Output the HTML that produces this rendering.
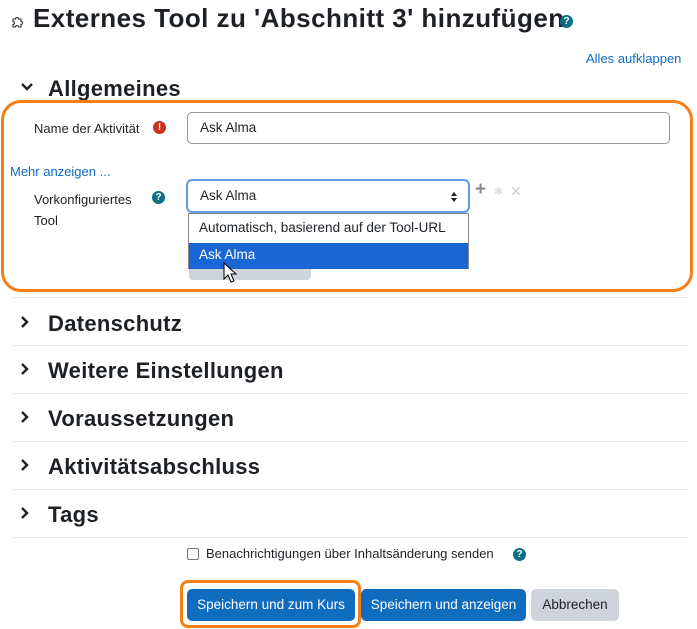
<!DOCTYPE html>
<html><head><meta charset="utf-8"><style>
body{margin:0;width:697px;height:629px;background:#fff;font-family:"Liberation Sans",sans-serif;color:#1d2125;position:relative;overflow:hidden}
.a{position:absolute}
.h{font-weight:bold;font-size:22px;left:48px;letter-spacing:0.3px}
.chev{left:20px}
.sep{left:12px;width:676px;height:1px;background:#dee2e6}
.lbl{font-size:13px;color:#1d2125}
.btn{border-radius:5px;font-size:13.5px;text-align:center;line-height:32px;height:32px;color:#fff;background:#0f6cbf}
.q{width:13px;height:13px;border-radius:50%;background:#0f6e84;color:#fff;font-size:10px;font-weight:bold;text-align:center;line-height:13px}
</style></head><body>
<svg class="a" style="left:10px;top:15px" width="14" height="14" viewBox="0 0 14 14"><path d="M3 4h2.5a1.5 1.5 0 1 1 3 0H11v2.5a1.5 1.5 0 1 1 0 3V12H8.5a1.5 1.5 0 1 0-3 0H3V9.5a1.5 1.5 0 1 0 0-3z" fill="none" stroke="#333" stroke-width="1.1"/></svg>
<div class="a" style="left:33px;top:3px;font-size:26px;font-weight:bold;letter-spacing:0.45px">Externes Tool zu 'Abschnitt 3' hinzufügen</div>
<div class="a q" style="left:560px;top:15px">?</div>
<div class="a" style="left:586px;top:51px;font-size:13px;color:#0f6cbf">Alles aufklappen</div>
<svg class="a chev" style="top:82px" width="14" height="10" viewBox="0 0 14 10"><path d="M2 2l5 5 5-5" fill="none" stroke="#1d2125" stroke-width="2.4"/></svg>
<div class="a h" style="top:76px">Allgemeines</div>
<div class="a" style="left:1px;top:100px;width:686px;height:186px;border:3px solid #f57f17;border-radius:20px"></div>
<div class="a lbl" style="left:34px;top:121px">Name der Aktivität</div>
<div class="a" style="left:153px;top:121px;width:13px;height:13px;border-radius:50%;background:#ca3120;color:#fff;font-size:10px;font-weight:bold;text-align:center;line-height:13px">!</div>
<div class="a" style="left:187px;top:112px;width:483px;height:32px;border:1px solid #8f959e;border-radius:5px;box-sizing:border-box;font-size:13.5px;line-height:30px;padding-left:12px">Ask Alma</div>
<div class="a" style="left:10px;top:164px;font-size:13px;color:#0f6cbf">Mehr anzeigen ...</div>
<div class="a lbl" style="left:34px;top:189px;line-height:21px">Vorkonfiguriertes<br>Tool</div>
<div class="a q" style="left:152px;top:191px">?</div>
<div class="a" style="left:189px;top:262px;width:122px;height:18px;background:#ced4da;border-radius:4px"></div>
<div class="a" style="left:186px;top:179px;width:284px;height:34px;border:2px solid #5c9be0;border-radius:6px;box-sizing:border-box;font-size:13.5px;line-height:30px;padding-left:12px;background:#fff">Ask Alma<svg style="position:absolute;right:11px;top:11px" width="6" height="10" viewBox="0 0 6 10"><path d="M0 4L3 0 6 4zM0 6L3 10 6 6z" fill="#1d2125"/></svg></div>
<div class="a" style="left:475px;top:179px;font-size:19px;font-weight:bold;color:#888">+</div>
<div class="a" style="left:494px;top:185px;font-size:11px;color:#ddd">&#10033;</div>
<div class="a" style="left:510px;top:183px;font-size:14px;color:#ccc">&#10005;</div>
<div class="a" style="left:188px;top:213px;width:281px;height:56px;border:1px solid #888;box-sizing:border-box;background:#fff;font-size:13.5px">
<div style="height:29px;line-height:28px;padding-left:10px">Automatisch, basierend auf der Tool-URL</div>
<div style="height:26px;line-height:24px;padding-left:10px;background:#1a66d4;color:#fff">Ask Alma</div></div>
<svg class="a" style="left:223px;top:262px" width="14" height="22" viewBox="0 0 14 22"><path d="M1 1v16l4-4 3 7 3-1-3-7h5z" fill="#fff" stroke="#000" stroke-width="1"/></svg>
<div class="a sep" style="top:297px"></div>
<svg class="a chev" style="top:315px" width="10" height="14" viewBox="0 0 10 14"><path d="M2 2l5 5-5 5" fill="none" stroke="#1d2125" stroke-width="2.4"/></svg><div class="a h" style="top:311px">Datenschutz</div>
<div class="a sep" style="top:345px"></div>
<svg class="a chev" style="top:362px" width="10" height="14" viewBox="0 0 10 14"><path d="M2 2l5 5-5 5" fill="none" stroke="#1d2125" stroke-width="2.4"/></svg><div class="a h" style="top:358px">Weitere Einstellungen</div>
<div class="a sep" style="top:393px"></div>
<svg class="a chev" style="top:410px" width="10" height="14" viewBox="0 0 10 14"><path d="M2 2l5 5-5 5" fill="none" stroke="#1d2125" stroke-width="2.4"/></svg><div class="a h" style="top:406px">Voraussetzungen</div>
<div class="a sep" style="top:441px"></div>
<svg class="a chev" style="top:458px" width="10" height="14" viewBox="0 0 10 14"><path d="M2 2l5 5-5 5" fill="none" stroke="#1d2125" stroke-width="2.4"/></svg><div class="a h" style="top:454px">Aktivitätsabschluss</div>
<div class="a sep" style="top:489px"></div>
<svg class="a chev" style="top:506px" width="10" height="14" viewBox="0 0 10 14"><path d="M2 2l5 5-5 5" fill="none" stroke="#1d2125" stroke-width="2.4"/></svg><div class="a h" style="top:502px">Tags</div>
<div class="a sep" style="top:537px"></div>
<div class="a" style="left:187px;top:548px;width:10px;height:10px;border:1px solid #777;border-radius:2px"></div>
<div class="a" style="left:206px;top:546px;font-size:13px">Benachrichtigungen über Inhaltsänderung senden</div>
<div class="a q" style="left:513px;top:548px">?</div>
<div class="a" style="left:180px;top:580px;width:175px;height:42px;border:3px solid #f57f17;border-radius:8px"></div>
<div class="a btn" style="left:187px;top:589px;width:168px">Speichern und zum Kurs</div>
<div class="a btn" style="left:361px;top:589px;width:165px">Speichern und anzeigen</div>
<div class="a btn" style="left:531px;top:589px;width:88px;background:#ced4da;color:#1d2125">Abbrechen</div>
</body></html>
